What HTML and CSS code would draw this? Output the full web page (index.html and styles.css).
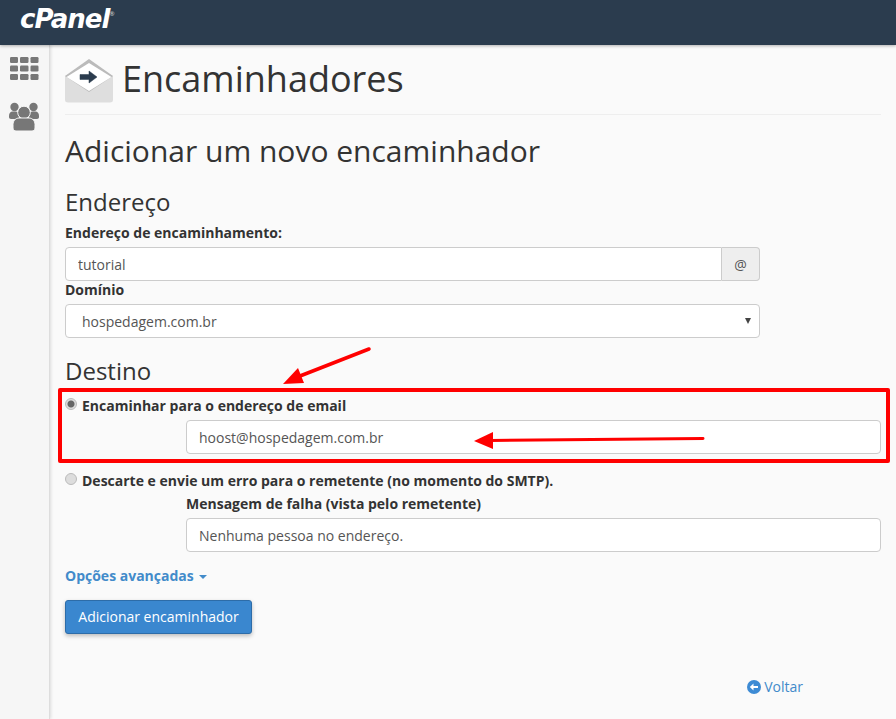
FILE: index.html
```html
<!DOCTYPE html>
<html>

<head>
    <meta charset="UTF-8">
    <title>Encaminhadores</title>
    <link rel="stylesheet" href="styles.css">
</head>

<body>
    <div class="topbar">
        <span class="logo">cPanel</span><span class="logo-reg">®</span>
    </div>

    <div class="layout">
        <div class="sidebar">
            <svg class="side-icon" width="29" height="23" viewBox="0 0 29 23" fill="#777">
                <rect x="0" y="0" width="8" height="6" rx="1.200" />
                <rect x="10" y="0" width="8.500" height="6" rx="1.200" />
                <rect x="20.500" y="0" width="8" height="6" rx="1.200" />
                <rect x="0" y="8.500" width="8" height="6" rx="1.200" />
                <rect x="10" y="8.500" width="8.500" height="6" rx="1.200" />
                <rect x="20.500" y="8.500" width="8" height="6" rx="1.200" />
                <rect x="0" y="17" width="8" height="6" rx="1.200" />
                <rect x="10" y="17" width="8.500" height="6" rx="1.200" />
                <rect x="20.500" y="17" width="8" height="6" rx="1.200" />
            </svg>
            <svg class="side-icon" width="30" height="29" viewBox="0 0 30 29" fill="#777">
                <circle cx="5.500" cy="5" r="4.200" />
                <circle cx="24.500" cy="5" r="4.200" />
                <path d="M0 14c0-3 1.500-4.500 3.500-4.500h3c2 0 3.500 1.500 3.500 4.500v3H2c-1.200 0-2-.8-2-2z" />
                <path d="M30 14c0-3-1.500-4.500-3.500-4.500h-3c-2 0-3.500 1.500-3.500 4.500v3h8c1.200 0 2-.8 2-2z" />
                <circle cx="15" cy="10.500" r="6.300" stroke="#f6f6f6" stroke-width="1" />
                <path d="M4 22.500c0-4 3-6.500 6-6.500h10c3 0 6 2.500 6 6.500V26c0 2-1.500 3-3 3H7c-1.500 0-3-1-3-3z" stroke="#f6f6f6" stroke-width="1" />
            </svg>
        </div>

        <div class="content">
            <div class="page-header">
                <svg class="page-icon" width="48" height="44" viewBox="0 0 48 44">
                    <path d="M0 17L24 6l24 11v24c0 1.700-1.300 2.500-3 2.500H3c-1.700 0-3-.8-3-2.500z" fill="#dedede" />
                    <path d="M0 17L24 0l24 17-24 16z" fill="#bbb" />
                    <path d="M1.500 18L24 4l22.500 14L24 32z" fill="#fff" />
                    <path d="M15 15.500h9V12l8 6-8 6v-3.500h-9z" fill="#2b3c4e" stroke="#2b3c4e" stroke-width="0.500" stroke-linejoin="round" />
                </svg>
                <h1>Encaminhadores</h1>
            </div>

            <h2 class="title">Adicionar um novo encaminhador</h2>

            <h3>Endereço</h3>
            <label class="field-label">Endereço de encaminhamento:</label>
            <div class="form-narrow input-group">
                <input class="text-input" type="text" value="tutorial">
                <span class="addon">@</span>
            </div>
            <label class="field-label domain-label">Domínio</label>
            <div class="form-narrow select-box">
                <span>hospedagem.com.br</span>
                <span class="caret-dark"></span>
            </div>

            <h3 class="dest">Destino</h3>
            <div class="radio-row">
                <span class="radio checked"></span>
                <span class="radio-label">Encaminhar para o endereço de email</span>
            </div>
            <div class="indent first-input">
                <input class="text-input" type="text" value="hoost@hospedagem.com.br">
            </div>
            <div class="radio-row second">
                <span class="radio"></span>
                <span class="radio-label">Descarte e envie um erro para o remetente (no momento do SMTP).</span>
            </div>
            <div class="indent">
                <label class="field-label fail-label">Mensagem de falha (vista pelo remetente)</label>
                <input class="text-input" type="text" value="Nenhuma pessoa no endereço.">
            </div>

            <a class="advanced" href="#">Opções avançadas <span class="caret-blue"></span></a>
            <button class="btn-primary">Adicionar encaminhador</button>

            <div class="back-row">
                <a class="back" href="#">
                    <svg width="14" height="14" viewBox="0 0 14 14">
                        <circle cx="7" cy="7" r="7" fill="#3d8bd4" />
                        <path d="M2.800 7l3.700-3.500V6h4.500v2H6.500v2.500z" fill="#fff" />
                    </svg>
                    Voltar
                </a>
            </div>
        </div>
    </div>

    <!-- red marks drawn on top of the screenshot -->
    <svg class="marks" width="896" height="719" viewBox="0 0 896 719">
        <rect x="60" y="390" width="828" height="71" fill="none" stroke="#f00" stroke-width="4" stroke-linejoin="round" />
        <path d="M369 349L300 376" stroke="#f00" stroke-width="3.500" stroke-linecap="round" />
        <path d="M283 384L298 368L304 383z" fill="#f00" />
        <path d="M703 438.500L490 440.500" stroke="#f00" stroke-width="3" stroke-linecap="round" />
        <path d="M474 441L493 432V449z" fill="#f00" />
    </svg>
</body>

</html>
```
FILE: styles.css
```css
* {
    box-sizing: border-box;
}

body {
    margin: 0;
    padding: 0;
    height: 719px;
    overflow: hidden;
    background-color: #fafafa;
    color: #333;
    font-family: "Open Sans", sans-serif;
    font-size: 14px;
}

.topbar {
    display: flex;
    align-items: flex-start;
    height: 45px;
    padding: 5px 0 0 20px;
    background-color: #2b3c4e;
    box-shadow: 0 1px 3px rgba(0, 0, 0, 0.3);
    position: relative;
}

.logo {
    color: white;
    font-family: "DejaVu Sans", sans-serif;
    font-size: 26px;
    font-style: italic;
    font-weight: 700;
    line-height: 29px;
    letter-spacing: -1px;
}

.logo-reg {
    color: #ddd;
    font-size: 6px;
    line-height: 12px;
    margin-top: 3px;
}

.layout {
    display: flex;
    height: 674px;
}

.sidebar {
    display: flex;
    flex-direction: column;
    align-items: center;
    gap: 22px;
    width: 50px;
    padding: 12px 1px 0 0;
    background-color: #f6f6f6;
    border-right: 1px solid #ddd;
    box-shadow: 1px 0 3px rgba(0, 0, 0, 0.12);
    flex-shrink: 0;
}

.content {
    flex: 1;
    padding: 0 15px;
}

.page-header {
    display: flex;
    align-items: flex-start;
    gap: 9px;
    height: 70px;
    padding-top: 14px;
    border-bottom: 1px solid #eee;
}

h1 {
    margin: 0;
    font-size: 36px;
    font-weight: 400;
    line-height: 39px;
}

.title {
    margin: 17px 0 0;
    font-size: 30px;
    font-weight: 400;
    line-height: 38px;
}

h3 {
    margin: 17px 0 0;
    font-size: 24px;
    font-weight: 400;
    line-height: 30px;
}

.field-label {
    display: block;
    margin-top: 6px;
    font-weight: 700;
    line-height: 19px;
}

.domain-label {
    margin-top: 0;
    line-height: 18px;
}

.form-narrow {
    width: 695px;
}

.input-group {
    display: flex;
    margin-top: 5px;
}

.text-input {
    display: block;
    width: 100%;
    height: 34px;
    padding: 6px 12px;
    background-color: white;
    border: 1px solid #ccc;
    border-radius: 4px;
    color: #555;
    font-family: "Open Sans", sans-serif;
    font-size: 14px;
}

.input-group .text-input {
    border-radius: 4px 0 0 4px;
}

.addon {
    display: flex;
    align-items: center;
    justify-content: center;
    flex-shrink: 0;
    width: 38px;
    background-color: #eee;
    border: 1px solid #ccc;
    border-left: 0;
    border-radius: 0 4px 4px 0;
    color: #555;
}

.select-box {
    display: flex;
    align-items: center;
    justify-content: space-between;
    height: 34px;
    margin-top: 5px;
    padding: 0 8px 0 16px;
    background-color: white;
    border: 1px solid #ccc;
    border-radius: 4px;
    color: #555;
}

.caret-dark {
    width: 0;
    height: 0;
    border-left: 3px solid transparent;
    border-right: 3px solid transparent;
    border-top: 6px solid #444;
}

.dest {
    margin-top: 18px;
}

.radio-row {
    display: flex;
    align-items: center;
    gap: 5px;
    height: 20px;
    margin-top: 9px;
}

.radio-row.second {
    margin-top: 16px;
}

.radio {
    width: 12px;
    height: 12px;
    margin-top: -3px;
    background-color: #ddd;
    border: 1px solid #bbb;
    border-radius: 50%;
    flex-shrink: 0;
}

.radio.checked {
    background: radial-gradient(circle, #666 0, #666 3px, #ddd 4px);
}

.radio-label {
    font-weight: 700;
}

.indent {
    margin-left: 121px;
}

.first-input {
    margin-top: 5px;
}

.fail-label {
    margin-top: 4px;
    margin-bottom: 5px;
}

.advanced {
    display: block;
    margin-top: 14px;
    color: #428bca;
    font-weight: 700;
    line-height: 20px;
    text-decoration: none;
}

.caret-blue {
    display: inline-block;
    width: 0;
    height: 0;
    margin-left: 2px;
    vertical-align: middle;
    border-left: 4px solid transparent;
    border-right: 4px solid transparent;
    border-top: 4px solid #428bca;
}

.btn-primary {
    display: block;
    width: 187px;
    height: 34px;
    margin-top: 14px;
    padding: 0 0 2px;
    background-color: #3a87cf;
    border: 1px solid #2d6ca8;
    border-radius: 3px;
    box-shadow: 0 2px 4px rgba(0, 0, 0, 0.25);
    color: white;
    font-family: "Open Sans", sans-serif;
    font-size: 14px;
}

.back-row {
    display: flex;
    justify-content: flex-end;
    margin-top: 43px;
    padding-right: 78px;
}

.back {
    display: flex;
    align-items: center;
    gap: 3px;
    color: #428bca;
    line-height: 20px;
    text-decoration: none;
}

.marks {
    position: absolute;
    top: 0;
    left: 0;
    pointer-events: none;
}
```
